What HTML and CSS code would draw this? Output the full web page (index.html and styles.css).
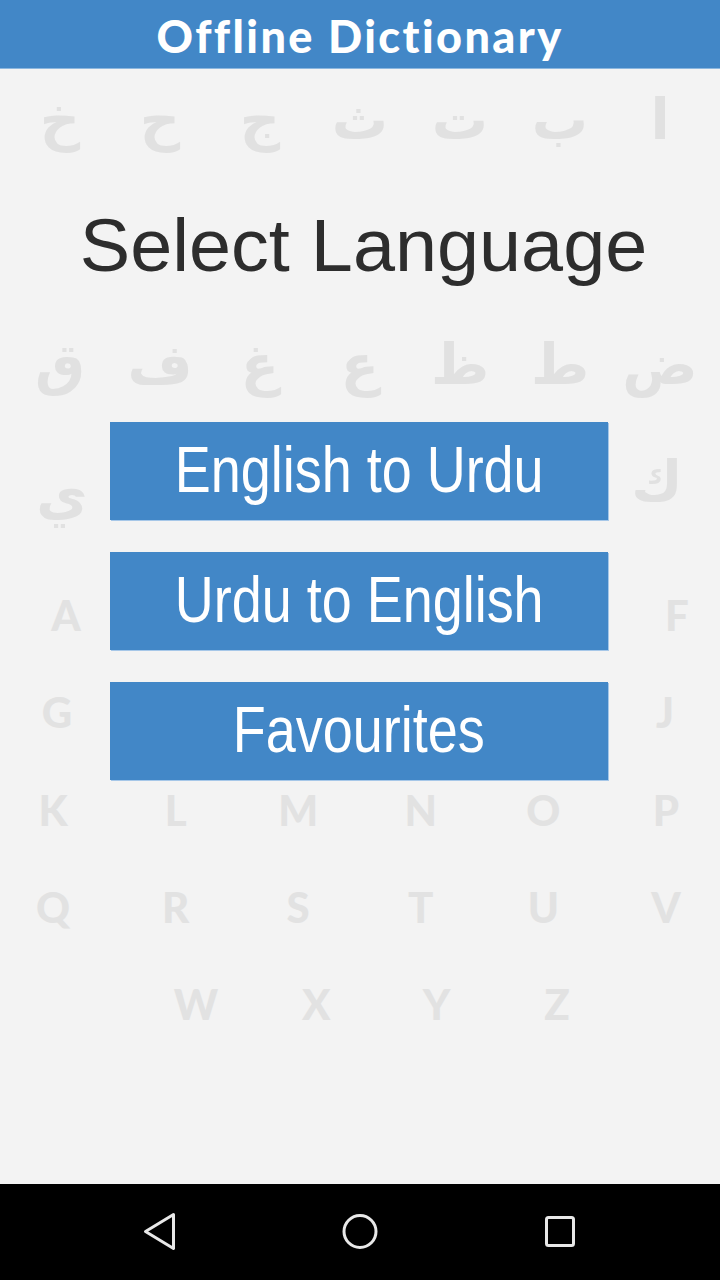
FILE: index.html
```html
<!DOCTYPE html>
<html lang="en">
<head>
<meta charset="utf-8">
<title>Offline Dictionary</title>
<link rel="stylesheet" href="styles.css">
</head>
<body>
<div class="screen">
  <header class="header">
    <h1 class="brand">Offline Dictionary</h1>
  </header>
  <main class="main">
    <div class="arabic-row row-one">
      <span>خ</span><span>ح</span><span>ج</span><span>ث</span><span>ت</span><span>ب</span><span>ا</span>
    </div>
    <h2 class="title"><span class="title-text">Select Language</span></h2>
    <div class="arabic-row row-two">
      <span>ق</span><span>ف</span><span>غ</span><span>ع</span><span>ظ</span><span>ط</span><span>ض</span>
    </div>
    <div class="menu">
      <div class="side side-left"><span class="ar-side ya">ي</span></div>
      <button class="btn"><span class="btn-text">English to Urdu</span></button>
      <div class="side side-right"><span class="ar-side kaf">ك</span></div>

      <div class="side side-left"><span class="lat-side a">A</span></div>
      <button class="btn"><span class="btn-text">Urdu to English</span></button>
      <div class="side side-right"><span class="lat-side f">F</span></div>

      <div class="side side-left"><span class="lat-side g">G</span></div>
      <button class="btn"><span class="btn-text">Favourites</span></button>
      <div class="side side-right"><span class="lat-side j">J</span></div>
    </div>
    <div class="latin-row row-k">
      <span>K</span><span>L</span><span>M</span><span>N</span><span>O</span><span>P</span>
    </div>
    <div class="latin-row row-q">
      <span>Q</span><span>R</span><span>S</span><span>T</span><span>U</span><span>V</span>
    </div>
    <div class="latin-row row-w">
      <span>W</span><span>X</span><span>Y</span><span>Z</span>
    </div>
  </main>
  <nav class="navbar">
    <span class="nav-item">
      <svg width="40" height="40" viewBox="0 0 40 40"><path d="M33.5 2.5 L5.5 19.5 L33.5 36.5 Z" fill="none" stroke="#e8e8e8" stroke-width="3" stroke-linejoin="round"/></svg>
    </span>
    <span class="nav-item">
      <svg width="40" height="40" viewBox="0 0 40 40"><circle cx="20" cy="19.5" r="16" fill="none" stroke="#e8e8e8" stroke-width="3"/></svg>
    </span>
    <span class="nav-item">
      <svg width="40" height="40" viewBox="0 0 40 40"><rect x="6.5" y="5.5" width="27" height="28" rx="2" fill="none" stroke="#e8e8e8" stroke-width="3"/></svg>
    </span>
  </nav>
</div>
</body>
</html>
```
FILE: styles.css
```css
* { box-sizing: border-box; }
html, body { margin: 0; padding: 0; }
body {
  width: 720px;
  height: 1280px;
  background: #f3f3f3;
  font-family: "Liberation Sans", Arial, sans-serif;
  overflow: hidden;
}
.screen {
  display: flex;
  flex-direction: column;
  height: 1280px;
}
.header {
  height: 69px;
  flex: none;
  background: #4287c7;
  border-bottom: 1px solid #8cb7df;
  display: flex;
  align-items: center;
  justify-content: center;
}
.brand {
  margin: 0;
  color: #ffffff;
  font-family: Lato, "Open Sans", sans-serif;
  font-weight: 900;
  font-size: 45px;
  letter-spacing: 2.4px;
  line-height: 1;
  padding-top: 4px;
}
.main {
  flex: 1;
  display: flex;
  flex-direction: column;
}
.arabic-row {
  display: grid;
  grid-template-columns: repeat(7, 100px);
  padding-left: 10px;
  justify-items: center;
  font-family: "DejaVu Sans", sans-serif;
  font-weight: bold;
  font-size: 56px;
  line-height: 56px;
  height: 56px;
  color: #e1e1e1;
}
.row-one { margin-top: 23px; }
.row-two { margin-top: 54px; }
.title {
  margin: 60px 0 0;
  height: 75px;
  font-weight: normal;
  font-size: 75px;
  line-height: 75px;
  color: #2d2d2d;
  text-align: center;
  font-family: "Liberation Sans", Arial, sans-serif;
}
.title-text {
  display: inline-block;
  transform: translateX(3px) scaleX(1.008);
}
.menu {
  margin-top: 29px;
  display: grid;
  grid-template-columns: 110px 498px 112px;
  grid-template-rows: 98px 98px 98px;
  row-gap: 32px;
}
.btn {
  margin: 0;
  padding: 0 0 4px;
  border: none;
  background: #4287c7;
  box-shadow: 1px 1px 0 #a6c7e8;
  color: #ffffff;
  font-family: "Liberation Sans", Arial, sans-serif;
  font-size: 65px;
  line-height: 65px;
  display: flex;
  align-items: center;
  justify-content: center;
}
.btn-text {
  display: inline-block;
  transform: scaleX(0.83);
}
.side {
  display: flex;
  justify-content: center;
  align-items: flex-start;
}
.ar-side {
  font-family: "DejaVu Sans", sans-serif;
  font-weight: bold;
  font-size: 56px;
  line-height: 56px;
  color: #e1e1e1;
}
.lat-side {
  font-family: Lato, sans-serif;
  font-weight: 900;
  font-size: 42px;
  line-height: 42px;
  color: #e2e2e2;
}
.ya { margin-top: 45px; margin-left: 14px; }
.kaf { margin-top: 32px; margin-right: 14px; }
.a { margin-top: 42px; margin-left: 22px; }
.f { margin-top: 42px; margin-left: 26px; }
.g { margin-top: 9px; margin-left: 4px; }
.j { margin-top: 9px; margin-left: 2px; }
.latin-row {
  display: flex;
  justify-content: space-between;
  font-family: Lato, sans-serif;
  font-weight: 900;
  font-size: 42px;
  line-height: 42px;
  height: 42px;
  color: #e2e2e2;
}
.latin-row span {
  width: 60px;
  text-align: center;
}
.row-k { margin-top: 9px; padding: 0 24px 0 23px; }
.row-q { margin-top: 55px; padding: 0 24px 0 23px; }
.row-w { margin-top: 55px; padding: 0 133px 0 166px; }
.navbar {
  height: 96px;
  flex: none;
  background: #000000;
  display: grid;
  grid-template-columns: repeat(3, 200px);
  padding-left: 60px;
  align-items: center;
  justify-items: center;
}
.nav-item {
  display: flex;
  width: 40px;
  height: 40px;
}
```
